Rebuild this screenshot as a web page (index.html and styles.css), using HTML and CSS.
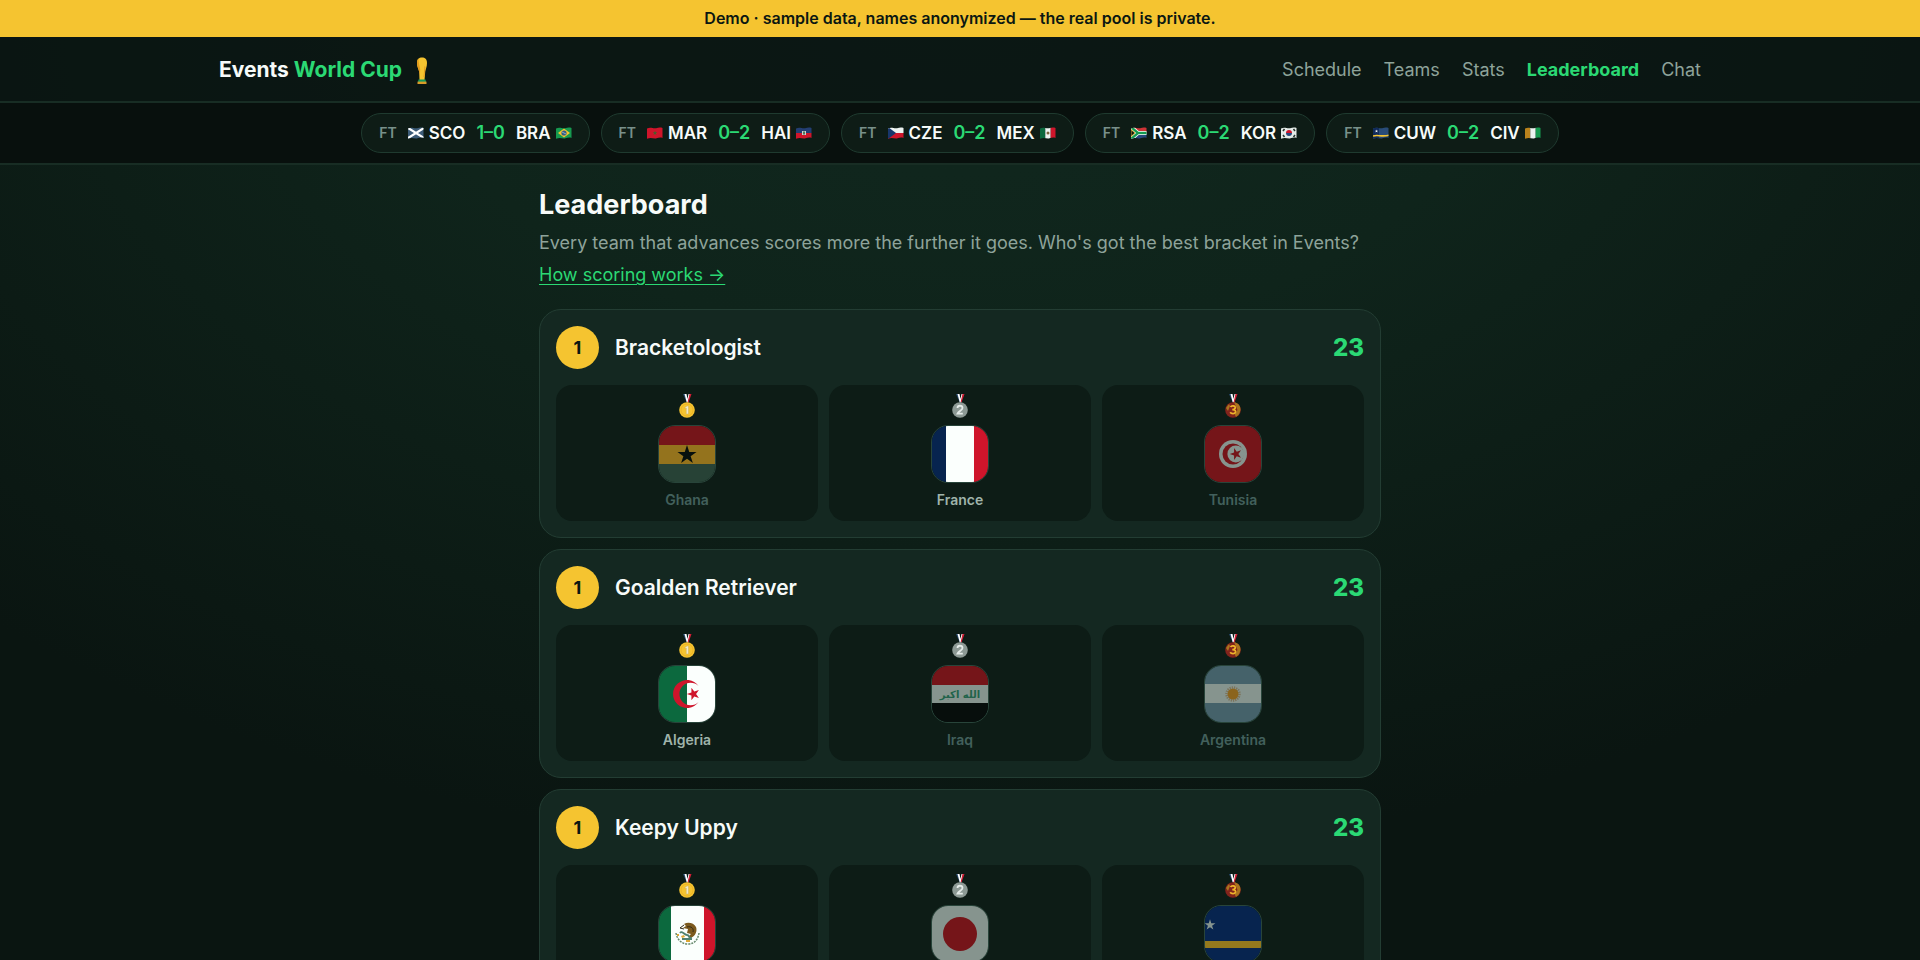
FILE: index.html
```html
<!DOCTYPE html>
<html lang="en">
<head>
    <meta charset="utf-8">
    <meta name="viewport" content="width=device-width, initial-scale=1">
    <title>Events World Cup</title>
    <link rel="stylesheet" href="styles.css">
</head>
<body>
    <svg class="sprite" aria-hidden="true">
        <defs>
            <polygon id="star" points="0,-10 2.25,-3.1 9.5,-3.1 3.63,1.18 5.88,8.1 0,3.82 -5.88,8.1 -3.63,1.18 -9.5,-3.1 -2.25,-3.1"/>

            <symbol id="trophy" viewBox="0 0 12 27">
                <path fill="#f5c430" d="M1 6C1 2 3 .5 6 .5S11 2 11 6c0 4-1.500 6-1.800 9L8.500 23H3.500L3.200 15C2.800 12 1 10 1 6z"/>
                <path fill="#e39a1d" d="M1 6c0-2 .5-3.500 1.500-4.500C2.500 5 3.500 9 4.200 12L4 17l-.8-2C2.800 12 1 10 1 6zM8.500 9l1 1L8.400 20H7.500z"/>
                <path fill="#159a59" d="M2.500 22.500h7l.5 2.500H2z"/>
                <path fill="#d89b28" d="M1.500 24.600h9V27h-9z"/>
            </symbol>

            <symbol id="ribbon" viewBox="0 0 16 24">
                <path fill="#27496f" d="M4 0h3l2.500 8h-2z"/>
                <path fill="#fff" d="M5.500 0H7.500l1 5 1-5H11L9.200 8.500H7.800z"/>
                <path fill="#d21f35" d="M10.500 0H12.500L9.500 8.500H8.500z"/>
            </symbol>
            <symbol id="medal1" viewBox="0 0 16 24">
                <use href="#ribbon"/>
                <circle cx="8" cy="16" r="7.800" fill="#f5c430"/>
                <circle cx="8" cy="16" r="6" fill="none" stroke="#e6a91f" stroke-width=".6"/>
                <path fill="#f4edcd" stroke="#c0a15a" stroke-width=".4" d="M6 13.500 8 12h1.400v8H7.300v-6l-1.300.700z"/>
            </symbol>
            <symbol id="medal2" viewBox="0 0 16 24">
                <use href="#ribbon"/>
                <circle cx="8" cy="16" r="7.800" fill="#8d9a95"/>
                <path fill="none" stroke="#e4ebe8" stroke-width="1.800" d="M5.500 14c0-3 5-3 5 0 0 2-4 3.500-5 5.600h5.300"/>
            </symbol>
            <symbol id="medal3" viewBox="0 0 16 24">
                <use href="#ribbon"/>
                <circle cx="8" cy="16" r="7.800" fill="#82231c"/>
                <path fill="#a9741f" d="M9 8.300c7 1 8 8 4.500 12.500L11 23l-1.500-3 3-4zM1 14l3-4 1 2-2 5z"/>
                <path fill="none" stroke="#efb62b" stroke-width="1.700" d="M5.500 13c1-1.800 5-1.500 4.700.800C10 15.500 8.500 15.700 7.300 15.700c1.500 0 3.400.3 3.200 2.200-.3 2.300-4.200 2.300-5.300.4"/>
            </symbol>

            <symbol id="flag-ghana" viewBox="0 0 56 56">
                <path fill="#751519" d="M0 0h56v19H0z"/>
                <path fill="#94731d" d="M0 19h56v19H0z"/>
                <path fill="#274236" d="M0 38h56v18H0z"/>
                <use href="#star" fill="#07100d" transform="translate(28 29)"/>
            </symbol>
            <symbol id="flag-france" viewBox="0 0 56 56">
                <path fill="#07244f" d="M0 0h14v56H0z"/>
                <path fill="#fbfffd" d="M14 0h28v56H14z"/>
                <path fill="#cf152b" d="M42 0h14v56H42z"/>
            </symbol>
            <symbol id="flag-tunisia" viewBox="0 0 56 56">
                <path fill="#751519" d="M0 0h56v56H0z"/>
                <circle cx="28" cy="28" r="14" fill="#86948e"/>
                <circle cx="28" cy="28" r="10.500" fill="#751519"/>
                <circle cx="30.800" cy="28" r="8.400" fill="#86948e"/>
                <use href="#star" fill="#751519" transform="translate(31 28) rotate(-90) scale(.62)"/>
            </symbol>
            <symbol id="flag-algeria" viewBox="0 0 56 56">
                <path fill="#0c693e" d="M0 0h28v56H0z"/>
                <path fill="#fbfffd" d="M28 0h28v56H28z"/>
                <path fill="#cf152b" d="M39.500 20a14 14 0 1 0 0 16 11.200 11.200 0 1 1 0-16z"/>
                <use href="#star" fill="#cf152b" transform="translate(34.500 28) rotate(-90) scale(.67)"/>
            </symbol>
            <symbol id="flag-iraq" viewBox="0 0 56 56">
                <path fill="#751519" d="M0 0h56v19H0z"/>
                <path fill="#86948e" d="M0 19h56v18H0z"/>
                <path fill="#070e0c" d="M0 37h56v19H0z"/>
                <text x="28" y="32" class="takbir">الله اكبر</text>
            </symbol>
            <symbol id="flag-argentina" viewBox="0 0 56 56">
                <path fill="#45626a" d="M0 0h56v56H0z"/>
                <path fill="#86948e" d="M0 18h56v19H0z"/>
                <circle cx="28" cy="28" r="6.500" fill="none" stroke="#7c735a" stroke-width="2.500" stroke-dasharray="1.200 1"/>
                <circle cx="28" cy="28" r="5.500" fill="#8b641d"/>
            </symbol>
            <symbol id="flag-mexico" viewBox="0 0 56 56">
                <path fill="#0c693e" d="M0 0h12v56H0z"/>
                <path fill="#fbfffd" d="M12 0h33v56H12z"/>
                <path fill="#cf152b" d="M45 0h11v56H45z"/>
                <path fill="none" stroke="#65886c" stroke-width="1.500" stroke-dasharray="2 1" d="M17 27c1 6 5 11 12 11s10-5 11-11"/>
                <path fill="#7c5a1e" d="M25 18c4-2.500 10-1 12 3 1.500 4-.5 9-5 11l-3-1 3-3-4-1 1-4-5-1 3-2z"/>
                <path fill="none" stroke="#322a18" d="M28 21c4-1 7 1 6 5M25 19l-4 3 4 1"/>
                <path fill="none" stroke="#4f8070" stroke-width="1.800" d="M21 27c2-3 4 2 7 2s1 4 5 3M23 33h10"/>
                <path fill="#dca735" d="M22 30l3-1 1 2-3 1zM27 34h4v2h-4zM18 28h2v2h-2z"/>
            </symbol>
            <symbol id="flag-japan" viewBox="0 0 56 56">
                <path fill="#86948e" d="M0 0h56v56H0z"/>
                <circle cx="28" cy="28" r="17" fill="#751519"/>
            </symbol>
            <symbol id="flag-curacao" viewBox="0 0 56 56">
                <path fill="#07244f" d="M0 0h56v56H0z"/>
                <path fill="#94791d" d="M0 35h56v7H0z"/>
                <use href="#star" fill="#86948e" transform="translate(5 19) scale(.57)"/>
            </symbol>

            <!-- small waving flags, clipped to one shared outline -->
            <clipPath id="wave"><path d="M0 1.500C4-.5 6 2 9 1.200 12 .3 14 .5 15.500 1v10c-2-.8-4-.3-6 .3-3 .8-5-1.400-9.500.500z"/></clipPath>
            <symbol id="mini-sco" viewBox="0 0 16 12"><g clip-path="url(#wave)"><path fill="#3d5c78" d="M0 0h16v12H0z"/><path stroke="#fff" stroke-width="2.200" d="M0 1l16 10M0 11L16 1"/></g></symbol>
            <symbol id="mini-bra" viewBox="0 0 16 12"><g clip-path="url(#wave)"><path fill="#169a50" d="M0 0h16v12H0z"/><path fill="#f5c430" d="M8 1.500 14 6l-6 4.500L2 6z"/><circle cx="8" cy="6" r="2.600" fill="#345d86"/><path stroke="#d5e3df" stroke-width=".6" d="m6 5 4 2"/></g></symbol>
            <symbol id="mini-mar" viewBox="0 0 16 12"><g clip-path="url(#wave)"><path fill="#cf152b" d="M0 0h16v12H0z"/><use href="#star" fill="#46602c" transform="translate(8 6) scale(.25)"/></g></symbol>
            <symbol id="mini-hai" viewBox="0 0 16 12"><g clip-path="url(#wave)"><path fill="#233e72" d="M0 0h16v6H0z"/><path fill="#cf152b" d="M0 6h16v6H0z"/><path fill="#cad3ce" d="M6 4h4v4H6z"/><path fill="#55765d" d="M7 4.500h2v3H7z"/></g></symbol>
            <symbol id="mini-cze" viewBox="0 0 16 12"><g clip-path="url(#wave)"><path fill="#edf3f1" d="M0 0h16v6H0z"/><path fill="#cf152b" d="M0 6h16v6H0z"/><path fill="#18366b" d="M0 0l8 6-8 6z"/></g></symbol>
            <symbol id="mini-mex" viewBox="0 0 16 12"><g clip-path="url(#wave)"><path fill="#0c693e" d="M0 0h5.300v12H0z"/><path fill="#edf3f1" d="M5.300 0h5.400v12H5.300z"/><path fill="#cf152b" d="M10.700 0H16v12h-5.300z"/><circle cx="8" cy="6" r="1.500" fill="#7a633b"/></g></symbol>
            <symbol id="mini-rsa" viewBox="0 0 16 12"><g clip-path="url(#wave)"><path fill="#cf3436" d="M0 0h16v6H0z"/><path fill="#27487d" d="M0 6h16v6H0z"/><path fill="none" stroke="#fff" stroke-width="4" d="M0 0l7 6-7 6M7 6h9"/><path fill="none" stroke="#159a50" stroke-width="2.400" d="M0 0l7 6-7 6M7 6h9"/><path fill="#101a12" stroke="#f5c430" stroke-width=".8" d="M0 2.500 4 6 0 9.500z"/></g></symbol>
            <symbol id="mini-kor" viewBox="0 0 16 12"><g clip-path="url(#wave)"><path fill="#e5ebe8" d="M0 0h16v12H0z"/><path fill="#cf152b" d="M5 6a3 3 0 0 1 6 0z"/><path fill="#27487d" d="M5 6a3 3 0 0 0 6 0z"/><path stroke="#25302c" stroke-width="1.500" d="m2 4 1.500-2M12.500 2 14 4M2 8l1.500 2M12.500 10 14 8"/></g></symbol>
            <symbol id="mini-cuw" viewBox="0 0 16 12"><g clip-path="url(#wave)"><path fill="#294c78" d="M0 0h16v12H0z"/><path fill="#102a5a" d="M0 0h6v12H0z"/><path fill="none" stroke="#f5c430" stroke-width="1.600" d="M0 9c5-1.500 8 1 16-.7"/><use href="#star" fill="#fff" transform="translate(3.500 4.200) scale(.17)"/></g></symbol>
            <symbol id="mini-civ" viewBox="0 0 16 12"><g clip-path="url(#wave)"><path fill="#b9821c" d="M0 0h5.300v12H0z"/><path fill="#edf3f1" d="M5.300 0h5.400v12H5.300z"/><path fill="#169a50" d="M10.700 0H16v12h-5.300z"/></g></symbol>
        </defs>
    </svg>

    <div class="banner">Demo · sample data, names anonymized — the real pool is private.</div>

    <header class="header">
        <div class="header-inner">
            <a class="brand" href="#">
                <span>Events <span class="accent">World Cup</span></span>
                <svg class="trophy"><use href="#trophy"/></svg>
            </a>
            <nav class="nav">
                <a href="#">Schedule</a>
                <a href="#">Teams</a>
                <a href="#">Stats</a>
                <a href="#" class="active">Leaderboard</a>
                <a href="#">Chat</a>
            </nav>
        </div>
    </header>

    <div class="ticker">
        <a class="match" href="#">
            <span class="status">FT</span>
            <span class="side"><svg class="mini"><use href="#mini-sco"/></svg>SCO</span>
            <span class="score">1–0</span>
            <span class="side">BRA<svg class="mini"><use href="#mini-bra"/></svg></span>
        </a>
        <a class="match" href="#">
            <span class="status">FT</span>
            <span class="side"><svg class="mini"><use href="#mini-mar"/></svg>MAR</span>
            <span class="score">0–2</span>
            <span class="side">HAI<svg class="mini"><use href="#mini-hai"/></svg></span>
        </a>
        <a class="match" href="#">
            <span class="status">FT</span>
            <span class="side"><svg class="mini"><use href="#mini-cze"/></svg>CZE</span>
            <span class="score">0–2</span>
            <span class="side">MEX<svg class="mini"><use href="#mini-mex"/></svg></span>
        </a>
        <a class="match" href="#">
            <span class="status">FT</span>
            <span class="side"><svg class="mini"><use href="#mini-rsa"/></svg>RSA</span>
            <span class="score">0–2</span>
            <span class="side">KOR<svg class="mini"><use href="#mini-kor"/></svg></span>
        </a>
        <a class="match" href="#">
            <span class="status">FT</span>
            <span class="side"><svg class="mini"><use href="#mini-cuw"/></svg>CUW</span>
            <span class="score">0–2</span>
            <span class="side">CIV<svg class="mini"><use href="#mini-civ"/></svg></span>
        </a>
    </div>

    <main class="main">
        <h1>Leaderboard</h1>
        <p class="intro">Every team that advances scores more the further it goes. Who's got the best bracket in Events?</p>
        <a class="scoring" href="#">How scoring works →</a>

        <section class="card">
            <div class="card-head">
                <span class="rank">1</span>
                <h2>Bracketologist</h2>
                <span class="points">23</span>
            </div>
            <div class="picks">
                <div class="pick out">
                    <svg class="medal"><use href="#medal1"/></svg>
                    <svg class="flag"><use href="#flag-ghana"/></svg>
                    <span>Ghana</span>
                </div>
                <div class="pick">
                    <svg class="medal"><use href="#medal2"/></svg>
                    <svg class="flag"><use href="#flag-france"/></svg>
                    <span>France</span>
                </div>
                <div class="pick out">
                    <svg class="medal"><use href="#medal3"/></svg>
                    <svg class="flag"><use href="#flag-tunisia"/></svg>
                    <span>Tunisia</span>
                </div>
            </div>
        </section>

        <section class="card">
            <div class="card-head">
                <span class="rank">1</span>
                <h2>Goalden Retriever</h2>
                <span class="points">23</span>
            </div>
            <div class="picks">
                <div class="pick">
                    <svg class="medal"><use href="#medal1"/></svg>
                    <svg class="flag"><use href="#flag-algeria"/></svg>
                    <span>Algeria</span>
                </div>
                <div class="pick out">
                    <svg class="medal"><use href="#medal2"/></svg>
                    <svg class="flag"><use href="#flag-iraq"/></svg>
                    <span>Iraq</span>
                </div>
                <div class="pick out">
                    <svg class="medal"><use href="#medal3"/></svg>
                    <svg class="flag"><use href="#flag-argentina"/></svg>
                    <span>Argentina</span>
                </div>
            </div>
        </section>

        <section class="card">
            <div class="card-head">
                <span class="rank">1</span>
                <h2>Keepy Uppy</h2>
                <span class="points">23</span>
            </div>
            <div class="picks">
                <div class="pick">
                    <svg class="medal"><use href="#medal1"/></svg>
                    <svg class="flag"><use href="#flag-mexico"/></svg>
                    <span>Mexico</span>
                </div>
                <div class="pick out">
                    <svg class="medal"><use href="#medal2"/></svg>
                    <svg class="flag"><use href="#flag-japan"/></svg>
                    <span>Japan</span>
                </div>
                <div class="pick out">
                    <svg class="medal"><use href="#medal3"/></svg>
                    <svg class="flag"><use href="#flag-curacao"/></svg>
                    <span>Curaçao</span>
                </div>
            </div>
        </section>
    </main>
</body>
</html>
```
FILE: styles.css
```css
* {
    box-sizing: border-box;
}

html {
    background-color: #0a1511;
    scrollbar-width: none;
}

body {
    margin: 0;
    min-height: 100vh;
    font-family: Inter, "Liberation Sans", sans-serif;
    font-size: 18px;
    line-height: 28px;
    color: #f7fbf9;
    background: radial-gradient(1400px 860px at 50% 0, #11281f 0%, #0f241b 40%, #0a1511 100%) no-repeat;
}

a {
    color: inherit;
    text-decoration: none;
}

.sprite {
    position: absolute;
    width: 0;
    height: 0;
}

.banner {
    padding: 8px 16px;
    background-color: #f5c430;
    color: #0b1712;
    font-size: 16px;
    font-weight: 600;
    line-height: 21px;
    text-align: center;
}

.header {
    background-color: rgba(10, 20, 17, 0.8);
    border-bottom: 2px solid #182d24;
}

.header-inner {
    display: flex;
    align-items: center;
    justify-content: space-between;
    max-width: 1518px;
    margin: 0 auto;
    padding: 19px 18px 17px;
}

.brand {
    display: flex;
    align-items: center;
    gap: 14px;
    font-size: 21px;
    font-weight: 700;
}

.trophy {
    width: 12px;
    height: 27px;
}

.accent, .nav .active {
    color: #2bd974;
}

.nav {
    display: flex;
    gap: 22px;
    color: #8ea39a;
}

.nav .active {
    font-weight: 700;
}

.ticker {
    display: flex;
    justify-content: center;
    gap: 11px;
    padding: 10px 18px;
    background-color: #08100d;
    border-bottom: 2px solid #182d24;
}

.match {
    display: flex;
    align-items: center;
    gap: 11px;
    padding: 5px 17px;
    border: 1px solid #1f3a2f;
    border-radius: 20px;
    background-color: #0e1c16;
    font-size: 17px;
    font-weight: 600;
}

.status {
    color: #78908a;
    font-size: 14px;
}

.side {
    display: flex;
    align-items: center;
    gap: 5px;
}

.score {
    color: #2bd974;
    font-size: 18px;
}

.mini {
    width: 16px;
    height: 12px;
}

.main {
    max-width: 878px;
    margin: 0 auto;
    padding: 22px 18px;
}

h1 {
    margin: 0 0 6px;
    font-size: 27px;
    line-height: 36px;
}

.intro {
    margin: 0 0 4px;
    color: #8ea39a;
}

.scoring {
    display: inline-block;
    margin-bottom: 20px;
    color: #2bd974;
    text-decoration: underline;
    text-underline-offset: 3px;
}

.card {
    margin-bottom: 11px;
    padding: 16px;
    border: 1px solid #233d33;
    border-radius: 22px;
    background-color: #142821;
}

.card-head {
    display: flex;
    align-items: center;
    gap: 16px;
    margin-bottom: 16px;
}

.rank {
    width: 43px;
    height: 43px;
    border-radius: 50%;
    background-color: #f5c430;
    color: #0b1712;
    font-weight: 700;
    line-height: 43px;
    text-align: center;
}

h2 {
    flex: 1;
    margin: 0;
    font-size: 21px;
    font-weight: 600;
}

.points {
    color: #2bd974;
    font-size: 24px;
    font-weight: 800;
}

.picks {
    display: grid;
    grid-template-columns: repeat(3, 1fr);
    gap: 11px;
}

.pick {
    display: flex;
    flex-direction: column;
    align-items: center;
    padding: 9px 9px 11px;
    border-radius: 16px;
    background-color: #0d1c16;
    color: #9fb3aa;
    font-size: 14px;
    font-weight: 600;
    line-height: 20px;
}

.pick.out {
    color: #42605c;
}

.medal {
    width: 16px;
    height: 24px;
    margin-bottom: 7px;
}

.flag {
    width: 58px;
    height: 58px;
    margin-bottom: 7px;
    border: 1px solid #28443a;
    border-radius: 17px;
}

.takbir {
    fill: #21634a;
    font-family: "DejaVu Sans", sans-serif;
    font-size: 10px;
    font-weight: 700;
    text-anchor: middle;
}
```
